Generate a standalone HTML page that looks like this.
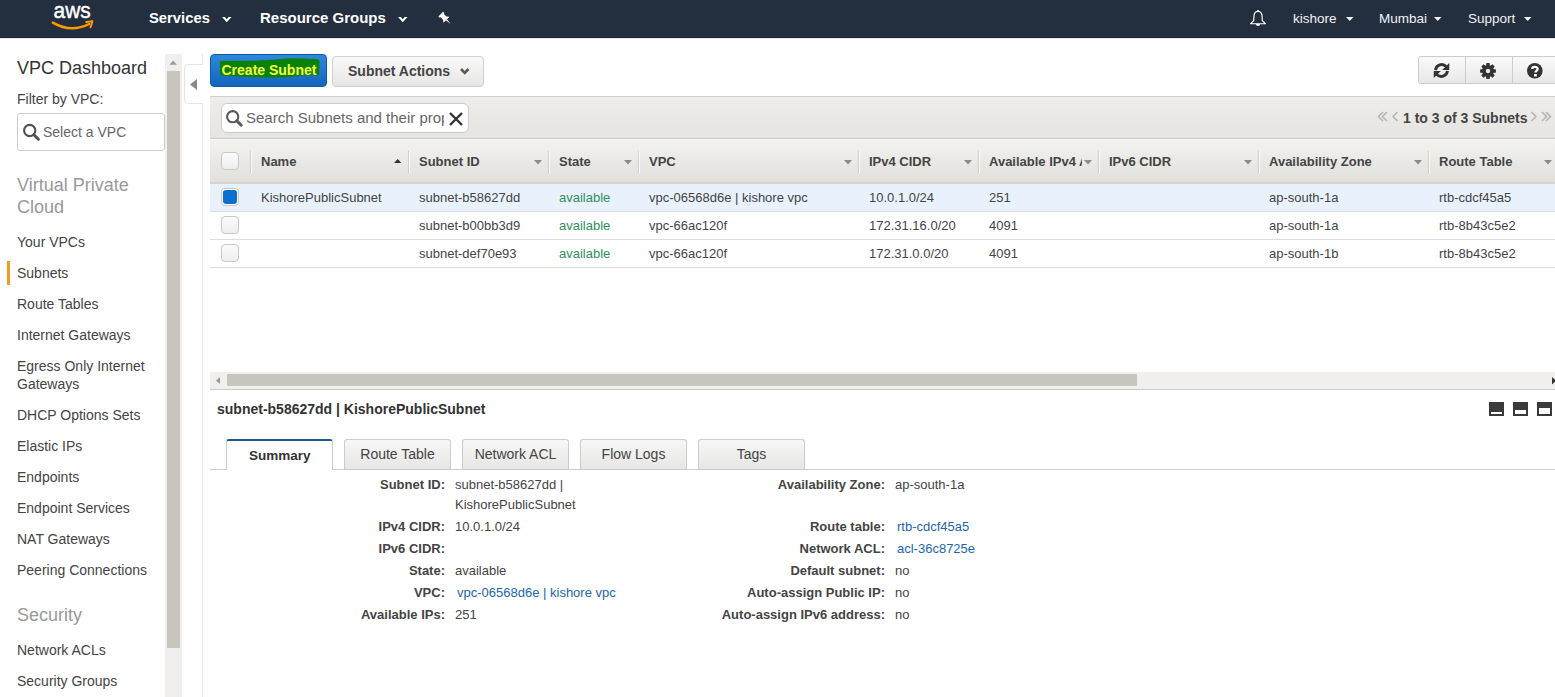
<!DOCTYPE html>
<html><head><meta charset="utf-8">
<style>
*{box-sizing:border-box;margin:0;padding:0}
html,body{width:1555px;height:697px;overflow:hidden;background:#fff;font-family:"Liberation Sans",sans-serif;color:#444}
body{position:relative}
.a{position:absolute;white-space:nowrap}
svg{position:absolute;overflow:visible}
</style></head><body>

<div class="a" style="left:0px;top:0px;width:1555px;height:38px;background:#232f3e;border-bottom:1px solid #1e252e"></div>
<div class="a" style="left:0px;top:38px;width:1555px;height:1px;background:#e9e9e9"></div>
<svg style="left:45px;top:0px" width="55" height="36" viewBox="0 0 55 36">
<text x="8.6" y="17.8" font-family="Liberation Sans" font-size="22" fill="#fff" stroke="#fff" stroke-width="0.45" transform="translate(8.6 0) scale(0.95 1) translate(-8.6 0)">aws</text>
<path d="M7.8 22.6 Q26 33.2 44.2 24" stroke="#f90" stroke-width="2.5" fill="none" stroke-linecap="round"/>
<path d="M41.2 21.9 L47.4 21.3 L45.6 27.2" stroke="#f90" stroke-width="2" fill="none" stroke-linecap="round" stroke-linejoin="round"/>
</svg>
<div class="a " style="left:149px;top:9.97px;font-size:14.8px;line-height:17px;color:#fff;font-weight:bold;">Services</div>
<svg style="left:221.8px;top:16.5px" width="10" height="6"><path d="M0 0 L2.9 0 L4.75 2.3 L6.6 0 L9.5 0 L4.75 5.3Z" fill="#fff"/></svg>
<div class="a " style="left:260px;top:8.90px;font-size:15px;line-height:17px;color:#fff;font-weight:bold;">Resource Groups</div>
<svg style="left:397.5px;top:16.5px" width="10" height="6"><path d="M0 0 L2.9 0 L4.75 2.3 L6.6 0 L9.5 0 L4.75 5.3Z" fill="#fff"/></svg>
<svg style="left:437px;top:10px" width="16" height="16" viewBox="0 0 16 16"><g transform="translate(8.5 8.8) scale(0.9) rotate(-45) translate(-8 -8)" fill="#fff"><path d="M4.3 0.5 H11.7 V2.6 H10.6 V6.8 L12.8 9.6 H3.2 L5.4 6.8 V2.6 H4.3 Z"/><path d="M7.1 9.5 H8.9 L8 16 Z"/></g></svg>
<svg style="left:1249px;top:9px" width="18" height="19" viewBox="0 0 18 19"><path d="M9 2.4 C5.8 2.4 4.9 5 4.9 8 L4.7 11.6 L1.6 14.7 L16.4 14.7 L13.3 11.6 L13.1 8 C13.1 5 12.2 2.4 9 2.4 Z" stroke="#fff" stroke-width="1.15" fill="none" stroke-linejoin="round"/><circle cx="9" cy="1.9" r="1" fill="#fff"/><path d="M6.9 15 A2.1 2.1 0 0 0 11.1 15 Z" fill="#fff"/></svg>
<div class="a " style="left:1293px;top:11.32px;font-size:13.5px;line-height:16px;color:#f2f2f2;">kishore</div>
<svg style="left:1346px;top:16.5px" width="8" height="5"><path d="M0 0 L7.5 0 L3.75 4Z" fill="#f2f2f2"/></svg>
<div class="a " style="left:1379px;top:11.32px;font-size:13.5px;line-height:16px;color:#f2f2f2;">Mumbai</div>
<svg style="left:1434px;top:16.5px" width="8" height="5"><path d="M0 0 L7.5 0 L3.75 4Z" fill="#f2f2f2"/></svg>
<div class="a " style="left:1468px;top:11.32px;font-size:13.5px;line-height:16px;color:#f2f2f2;">Support</div>
<svg style="left:1524px;top:16.5px" width="8" height="5"><path d="M0 0 L7.5 0 L3.75 4Z" fill="#f2f2f2"/></svg>
<div class="a " style="left:17px;top:58.26px;font-size:18px;line-height:21px;color:#333;">VPC Dashboard</div>
<div class="a " style="left:17px;top:91.15px;font-size:14px;line-height:16px;color:#444;">Filter by VPC:</div>
<div class="a" style="left:17px;top:113px;width:148px;height:38px;border:1px solid #ccc;border-radius:3px;background:#fff"></div>
<svg style="left:23px;top:124px" width="18" height="18" viewBox="0 0 18 18"><circle cx="6.7" cy="6.5" r="5.6" stroke="#505050" stroke-width="2.1" fill="none"/><path d="M10.9 10.7 L15.4 15.2" stroke="#505050" stroke-width="3" stroke-linecap="round"/></svg>
<div class="a " style="left:43px;top:124.15px;font-size:14px;line-height:16px;color:#666;">Select a VPC</div>
<div class="a " style="left:17px;top:175.26px;font-size:18px;line-height:21px;color:#999;">Virtual Private</div>
<div class="a " style="left:17px;top:197.26px;font-size:18px;line-height:21px;color:#999;">Cloud</div>
<div class="a " style="left:17px;top:234.15px;font-size:14px;line-height:16px;color:#444;">Your VPCs</div>
<div class="a " style="left:17px;top:265.15px;font-size:14px;line-height:16px;color:#444;">Subnets</div>
<div class="a " style="left:17px;top:296.15px;font-size:14px;line-height:16px;color:#444;">Route Tables</div>
<div class="a " style="left:17px;top:327.15px;font-size:14px;line-height:16px;color:#444;">Internet Gateways</div>
<div class="a " style="left:17px;top:358.15px;font-size:14px;line-height:16px;color:#444;">Egress Only Internet</div>
<div class="a " style="left:17px;top:376.15px;font-size:14px;line-height:16px;color:#444;">Gateways</div>
<div class="a " style="left:17px;top:407.15px;font-size:14px;line-height:16px;color:#444;">DHCP Options Sets</div>
<div class="a " style="left:17px;top:438.15px;font-size:14px;line-height:16px;color:#444;">Elastic IPs</div>
<div class="a " style="left:17px;top:469.15px;font-size:14px;line-height:16px;color:#444;">Endpoints</div>
<div class="a " style="left:17px;top:500.15px;font-size:14px;line-height:16px;color:#444;">Endpoint Services</div>
<div class="a " style="left:17px;top:531.15px;font-size:14px;line-height:16px;color:#444;">NAT Gateways</div>
<div class="a " style="left:17px;top:562.15px;font-size:14px;line-height:16px;color:#444;">Peering Connections</div>
<div class="a " style="left:17px;top:642.15px;font-size:14px;line-height:16px;color:#444;">Network ACLs</div>
<div class="a " style="left:17px;top:673.15px;font-size:14px;line-height:16px;color:#444;">Security Groups</div>
<div class="a" style="left:7px;top:261px;width:3px;height:24px;background:#f39a1f"></div>
<div class="a " style="left:17px;top:605.26px;font-size:18px;line-height:21px;color:#999;">Security</div>
<div class="a" style="left:165px;top:54px;width:17px;height:643px;background:#f0efed"></div>
<div class="a" style="left:167px;top:71px;width:13px;height:577px;background:#c8c5bf"></div>
<svg style="left:169px;top:60px" width="10" height="6"><path d="M0.5 4.8 L4.2 0.5 L7.9 4.8Z" fill="#999"/></svg>
<div class="a" style="left:202px;top:54px;width:1px;height:643px;background:#e8e8e8"></div>
<div class="a" style="left:184px;top:64px;width:19px;height:40px;border:1px solid #e3e3e3;border-right:none;border-radius:5px 0 0 5px;background:#fff"></div>
<svg style="left:190px;top:79px" width="8" height="12"><path d="M7 0 L7 11 L0 5.5Z" fill="#888"/></svg>
<div class="a" style="left:210px;top:54px;width:117px;height:33px;background:linear-gradient(#2d87da,#1465bd);border-radius:4px;border:1px solid #0d5cab"></div>
<svg style="left:205px;top:50px" width="130" height="40" viewBox="0 0 130 40"><path d="M15 11 L50 10.8 L70 9.5 L84 8.2 L100 8.4 L113 9.2 L114.5 11 L114.2 25 L100 25.6 L80 27.3 L60 27.6 L40 26.8 L20 25.8 L15 25 Z" fill="#0a820a"/></svg>
<div class="a " style="left:221.5px;top:62.15px;font-size:14px;line-height:16px;color:#f4ff3c;font-weight:bold;">Create Subnet</div>
<div class="a" style="left:332px;top:56px;width:152px;height:31px;background:linear-gradient(#f9f9f9,#e6e6e4);border:1px solid #cfcfcf;border-radius:4px"></div>
<div class="a " style="left:348px;top:63.15px;font-size:14px;line-height:16px;color:#444;font-weight:bold;">Subnet Actions</div>
<svg style="left:459px;top:67px" width="12" height="9"><path d="M2 2 L5.75 5.8 L9.5 2" stroke="#5a5a5a" stroke-width="2.6" fill="none"/></svg>
<div class="a" style="left:1418px;top:56px;width:140px;height:28px;background:linear-gradient(#fafafa,#e8e8e8);border:1px solid #ccc;border-radius:3px"></div>
<div class="a" style="left:1465px;top:57px;width:1px;height:26px;background:#ccc"></div>
<div class="a" style="left:1512px;top:57px;width:1px;height:26px;background:#ccc"></div>
<svg style="left:1433px;top:62px" width="17" height="17" viewBox="0 0 16 16"><path d="M2.4 7.6 A5.7 5.7 0 0 1 12.4 4.4" stroke="#333" stroke-width="2.7" fill="none"/><path d="M15.3 0.9 L15.3 7.6 L8.6 7.6Z" fill="#333"/><path d="M13.6 8.4 A5.7 5.7 0 0 1 3.6 11.6" stroke="#333" stroke-width="2.7" fill="none"/><path d="M0.7 15.1 L0.7 8.4 L7.4 8.4Z" fill="#333"/></svg>
<svg style="left:1480px;top:62.5px" width="16" height="16" viewBox="-8 -8 16 16"><g fill="#333"><rect x="-1.75" y="-7.9" width="3.5" height="3.5" rx="0.5" transform="rotate(0)"/><rect x="-1.75" y="-7.9" width="3.5" height="3.5" rx="0.5" transform="rotate(45)"/><rect x="-1.75" y="-7.9" width="3.5" height="3.5" rx="0.5" transform="rotate(90)"/><rect x="-1.75" y="-7.9" width="3.5" height="3.5" rx="0.5" transform="rotate(135)"/><rect x="-1.75" y="-7.9" width="3.5" height="3.5" rx="0.5" transform="rotate(180)"/><rect x="-1.75" y="-7.9" width="3.5" height="3.5" rx="0.5" transform="rotate(225)"/><rect x="-1.75" y="-7.9" width="3.5" height="3.5" rx="0.5" transform="rotate(270)"/><rect x="-1.75" y="-7.9" width="3.5" height="3.5" rx="0.5" transform="rotate(315)"/><circle r="6"/></g><circle r="2.2" fill="#eeedeb"/></svg>
<svg style="left:1527px;top:62.5px" width="16" height="16" viewBox="0 0 16 16"><circle cx="7.8" cy="7.8" r="7.8" fill="#333"/><path d="M5.2 6.1 C5.2 3.2 10.6 3.2 10.6 6 C10.6 7.9 8.4 8 8.4 9.6" stroke="#fff" stroke-width="2.3" fill="none"/><rect x="7" y="11" width="2.8" height="2.5" fill="#fff"/></svg>
<div class="a" style="left:210px;top:96px;width:1345px;height:43px;background:linear-gradient(#eeedeb,#e5e4e1);border-top:1px solid #cfcfcf;border-bottom:1px solid #c8c8c6"></div>
<div class="a" style="left:221px;top:103px;width:248px;height:30px;background:#fff;border:1px solid #ccc;border-radius:6px"></div>
<svg style="left:226px;top:108px" width="20" height="20" viewBox="0 0 20 20"><circle cx="6.7" cy="8.7" r="5.6" stroke="#585858" stroke-width="2.1" fill="none"/><path d="M10.9 12.9 L15.2 17.2" stroke="#585858" stroke-width="3" stroke-linecap="round"/></svg>
<div class="a" style="left:246px;top:107px;width:198px;height:22px;overflow:hidden"><div class="a" style="left:0;top:2px;font-size:15px;line-height:17px;color:#666">Search Subnets and their properties</div></div>
<svg style="left:447.5px;top:110.5px" width="16" height="16"><path d="M2 2 L14 14 M14 2 L2 14" stroke="#333" stroke-width="2.4"/></svg>
<div class="a " style="left:1403px;top:110.15px;font-size:14px;line-height:16px;color:#444;font-weight:bold;">1 to 3 of 3 Subnets</div>
<svg style="left:1377px;top:111px" width="24" height="11" viewBox="0 0 24 11"><path d="M6 1 L1.5 5.5 L6 10 M10 1 L5.5 5.5 L10 10 M20.5 1 L16 5.5 L20.5 10" stroke="#b3b3b3" stroke-width="1.5" fill="none"/></svg>
<svg style="left:1530px;top:111px" width="24" height="11" viewBox="0 0 24 11"><path d="M1.5 1 L6 5.5 L1.5 10 M12 1 L16.5 5.5 L12 10 M16 1 L20.5 5.5 L16 10" stroke="#b3b3b3" stroke-width="1.5" fill="none"/></svg>
<div class="a" style="left:210px;top:139px;width:1345px;height:45px;background:linear-gradient(#f3f2f0,#e2e0dc);border-top:1px solid #fafafa;border-bottom:2px solid #d6d4cf"></div>
<div class="a" style="left:221px;top:152px;width:18px;height:18px;background:linear-gradient(#fbfbfb,#eee);border:1px solid #c8c8c8;border-radius:4px"></div>
<div class="a" style="left:250px;top:151px;width:1px;height:23px;background:#d0cec9"></div>
<div class="a" style="left:251px;top:151px;width:1px;height:23px;background:#fbfbfa"></div>
<div class="a " style="left:261px;top:154.00px;font-size:13px;line-height:15px;color:#444;font-weight:bold;">Name</div>
<svg style="left:394px;top:159px" width="8" height="5"><path d="M0 4 L7.4 4 L3.7 0Z" fill="#333"/></svg>
<div class="a" style="left:408px;top:151px;width:1px;height:23px;background:#d0cec9"></div>
<div class="a" style="left:409px;top:151px;width:1px;height:23px;background:#fbfbfa"></div>
<div class="a " style="left:419px;top:154.00px;font-size:13px;line-height:15px;color:#444;font-weight:bold;">Subnet ID</div>
<svg style="left:534px;top:160px" width="9" height="6"><path d="M0 0 L8 0 L4 4.5Z" fill="#8a8a8a"/></svg>
<div class="a" style="left:548px;top:151px;width:1px;height:23px;background:#d0cec9"></div>
<div class="a" style="left:549px;top:151px;width:1px;height:23px;background:#fbfbfa"></div>
<div class="a " style="left:559px;top:154.00px;font-size:13px;line-height:15px;color:#444;font-weight:bold;">State</div>
<svg style="left:624px;top:160px" width="9" height="6"><path d="M0 0 L8 0 L4 4.5Z" fill="#8a8a8a"/></svg>
<div class="a" style="left:638px;top:151px;width:1px;height:23px;background:#d0cec9"></div>
<div class="a" style="left:639px;top:151px;width:1px;height:23px;background:#fbfbfa"></div>
<div class="a " style="left:649px;top:154.00px;font-size:13px;line-height:15px;color:#444;font-weight:bold;">VPC</div>
<svg style="left:844px;top:160px" width="9" height="6"><path d="M0 0 L8 0 L4 4.5Z" fill="#8a8a8a"/></svg>
<div class="a" style="left:858px;top:151px;width:1px;height:23px;background:#d0cec9"></div>
<div class="a" style="left:859px;top:151px;width:1px;height:23px;background:#fbfbfa"></div>
<div class="a " style="left:869px;top:154.00px;font-size:13px;line-height:15px;color:#444;font-weight:bold;">IPv4 CIDR</div>
<svg style="left:964px;top:160px" width="9" height="6"><path d="M0 0 L8 0 L4 4.5Z" fill="#8a8a8a"/></svg>
<div class="a" style="left:978px;top:151px;width:1px;height:23px;background:#d0cec9"></div>
<div class="a" style="left:979px;top:151px;width:1px;height:23px;background:#fbfbfa"></div>
<div class="a" style="left:989px;top:150px;width:93px;height:22px;overflow:hidden"><div class="a" style="left:0;top:4px;font-size:13px;line-height:15px;font-weight:bold;color:#444">Available IPv4 Addresses</div></div>
<svg style="left:1084px;top:160px" width="9" height="6"><path d="M0 0 L8 0 L4 4.5Z" fill="#8a8a8a"/></svg>
<div class="a" style="left:1098px;top:151px;width:1px;height:23px;background:#d0cec9"></div>
<div class="a" style="left:1099px;top:151px;width:1px;height:23px;background:#fbfbfa"></div>
<div class="a " style="left:1109px;top:154.00px;font-size:13px;line-height:15px;color:#444;font-weight:bold;">IPv6 CIDR</div>
<svg style="left:1244px;top:160px" width="9" height="6"><path d="M0 0 L8 0 L4 4.5Z" fill="#8a8a8a"/></svg>
<div class="a" style="left:1258px;top:151px;width:1px;height:23px;background:#d0cec9"></div>
<div class="a" style="left:1259px;top:151px;width:1px;height:23px;background:#fbfbfa"></div>
<div class="a " style="left:1269px;top:154.00px;font-size:13px;line-height:15px;color:#444;font-weight:bold;">Availability Zone</div>
<svg style="left:1414px;top:160px" width="9" height="6"><path d="M0 0 L8 0 L4 4.5Z" fill="#8a8a8a"/></svg>
<div class="a" style="left:1428px;top:151px;width:1px;height:23px;background:#d0cec9"></div>
<div class="a" style="left:1429px;top:151px;width:1px;height:23px;background:#fbfbfa"></div>
<div class="a " style="left:1439px;top:154.00px;font-size:13px;line-height:15px;color:#444;font-weight:bold;">Route Table</div>
<svg style="left:1544px;top:160px" width="9" height="6"><path d="M0 0 L8 0 L4 4.5Z" fill="#8a8a8a"/></svg>
<div class="a" style="left:210px;top:184px;width:1345px;height:28px;background:#e9f2fc;border-bottom:1px solid #ddd"></div>
<div class="a" style="left:221px;top:188px;width:18px;height:18px;background:#fff;border:1px solid #c8c8c8;border-radius:4px"></div>
<div class="a" style="left:223px;top:190px;width:14px;height:14px;background:#0a6fcf;border-radius:3px"></div>
<div class="a " style="left:261px;top:189.50px;font-size:13px;line-height:15px;color:#444;">KishorePublicSubnet</div>
<div class="a " style="left:419px;top:189.50px;font-size:13px;line-height:15px;color:#444;">subnet-b58627dd</div>
<div class="a " style="left:559px;top:189.50px;font-size:13px;line-height:15px;color:#2f8f5b;">available</div>
<div class="a " style="left:649px;top:189.50px;font-size:13px;line-height:15px;color:#444;">vpc-06568d6e | kishore vpc</div>
<div class="a " style="left:869px;top:189.50px;font-size:13px;line-height:15px;color:#444;">10.0.1.0/24</div>
<div class="a " style="left:989px;top:189.50px;font-size:13px;line-height:15px;color:#444;">251</div>
<div class="a " style="left:1269px;top:189.50px;font-size:13px;line-height:15px;color:#444;">ap-south-1a</div>
<div class="a " style="left:1439px;top:189.50px;font-size:13px;line-height:15px;color:#444;">rtb-cdcf45a5</div>
<div class="a" style="left:210px;top:212px;width:1345px;height:28px;background:#fff;border-bottom:1px solid #ddd"></div>
<div class="a" style="left:221px;top:216px;width:18px;height:18px;background:linear-gradient(#fbfbfb,#eee);border:1px solid #c8c8c8;border-radius:4px"></div>
<div class="a " style="left:261px;top:217.50px;font-size:13px;line-height:15px;color:#444;"></div>
<div class="a " style="left:419px;top:217.50px;font-size:13px;line-height:15px;color:#444;">subnet-b00bb3d9</div>
<div class="a " style="left:559px;top:217.50px;font-size:13px;line-height:15px;color:#2f8f5b;">available</div>
<div class="a " style="left:649px;top:217.50px;font-size:13px;line-height:15px;color:#444;">vpc-66ac120f</div>
<div class="a " style="left:869px;top:217.50px;font-size:13px;line-height:15px;color:#444;">172.31.16.0/20</div>
<div class="a " style="left:989px;top:217.50px;font-size:13px;line-height:15px;color:#444;">4091</div>
<div class="a " style="left:1269px;top:217.50px;font-size:13px;line-height:15px;color:#444;">ap-south-1a</div>
<div class="a " style="left:1439px;top:217.50px;font-size:13px;line-height:15px;color:#444;">rtb-8b43c5e2</div>
<div class="a" style="left:210px;top:240px;width:1345px;height:28px;background:#fff;border-bottom:1px solid #ddd"></div>
<div class="a" style="left:221px;top:244px;width:18px;height:18px;background:linear-gradient(#fbfbfb,#eee);border:1px solid #c8c8c8;border-radius:4px"></div>
<div class="a " style="left:261px;top:245.50px;font-size:13px;line-height:15px;color:#444;"></div>
<div class="a " style="left:419px;top:245.50px;font-size:13px;line-height:15px;color:#444;">subnet-def70e93</div>
<div class="a " style="left:559px;top:245.50px;font-size:13px;line-height:15px;color:#2f8f5b;">available</div>
<div class="a " style="left:649px;top:245.50px;font-size:13px;line-height:15px;color:#444;">vpc-66ac120f</div>
<div class="a " style="left:869px;top:245.50px;font-size:13px;line-height:15px;color:#444;">172.31.0.0/20</div>
<div class="a " style="left:989px;top:245.50px;font-size:13px;line-height:15px;color:#444;">4091</div>
<div class="a " style="left:1269px;top:245.50px;font-size:13px;line-height:15px;color:#444;">ap-south-1b</div>
<div class="a " style="left:1439px;top:245.50px;font-size:13px;line-height:15px;color:#444;">rtb-8b43c5e2</div>
<div class="a" style="left:210px;top:372px;width:1345px;height:18px;background:#f1f0ee;border-bottom:1px solid #cbc9c4"></div>
<div class="a" style="left:227px;top:374px;width:910px;height:12px;background:#c8c5bf"></div>
<svg style="left:216px;top:377px" width="5" height="8"><path d="M4 0 L4 7 L0 3.5Z" fill="#999"/></svg>
<svg style="left:1551.5px;top:376.5px" width="5" height="9"><path d="M0 0 L0 7.5 L4 3.75Z" fill="#333"/></svg>
<div class="a " style="left:217px;top:401.15px;font-size:14px;line-height:16px;color:#333;font-weight:bold;">subnet-b58627dd | KishorePublicSubnet</div>
<div class="a" style="left:1489px;top:402px;width:15px;height:14px;background:#3a3a3a"></div>
<div class="a" style="left:1491px;top:412px;width:11px;height:2px;background:#fff"></div>
<div class="a" style="left:1513px;top:402px;width:15px;height:14px;background:#3a3a3a"></div>
<div class="a" style="left:1515px;top:410px;width:11px;height:4px;background:#fff"></div>
<div class="a" style="left:1537px;top:402px;width:15px;height:14px;background:#3a3a3a"></div>
<div class="a" style="left:1539px;top:408px;width:11px;height:6px;background:#fff"></div>
<div class="a" style="left:210px;top:469px;width:1345px;height:1px;background:#ccc"></div>
<div class="a" style="left:226px;top:439px;width:107px;height:31px;background:#fff;border:1px solid #ccc;border-top:2px solid #1c5a96;border-bottom:none;border-radius:3px 3px 0 0"></div>
<div class="a " style="left:249px;top:448.32px;font-size:13.5px;line-height:16px;color:#333;font-weight:bold;">Summary</div>
<div class="a" style="left:344px;top:439px;width:107px;height:30px;background:linear-gradient(#f7f7f7,#e7e6e4);border:1px solid #ccc;border-bottom:none;border-radius:3px 3px 0 0"></div>
<div class="a" style="left:344px;top:446.15px;width:107px;text-align:center;font-size:14px;line-height:16px;color:#444">Route Table</div>
<div class="a" style="left:462px;top:439px;width:107px;height:30px;background:linear-gradient(#f7f7f7,#e7e6e4);border:1px solid #ccc;border-bottom:none;border-radius:3px 3px 0 0"></div>
<div class="a" style="left:462px;top:446.15px;width:107px;text-align:center;font-size:14px;line-height:16px;color:#444">Network ACL</div>
<div class="a" style="left:580px;top:439px;width:107px;height:30px;background:linear-gradient(#f7f7f7,#e7e6e4);border:1px solid #ccc;border-bottom:none;border-radius:3px 3px 0 0"></div>
<div class="a" style="left:580px;top:446.15px;width:107px;text-align:center;font-size:14px;line-height:16px;color:#444">Flow Logs</div>
<div class="a" style="left:698px;top:439px;width:107px;height:30px;background:linear-gradient(#f7f7f7,#e7e6e4);border:1px solid #ccc;border-bottom:none;border-radius:3px 3px 0 0"></div>
<div class="a" style="left:698px;top:446.15px;width:107px;text-align:center;font-size:14px;line-height:16px;color:#444">Tags</div>
<div class="a " style="right:1110px;top:477.00px;font-size:13px;line-height:15px;color:#444;text-align:right;font-weight:bold;">Subnet ID:</div>
<div class="a " style="right:1110px;top:519.00px;font-size:13px;line-height:15px;color:#444;text-align:right;font-weight:bold;">IPv4 CIDR:</div>
<div class="a " style="right:1110px;top:541.00px;font-size:13px;line-height:15px;color:#444;text-align:right;font-weight:bold;">IPv6 CIDR:</div>
<div class="a " style="right:1110px;top:563.00px;font-size:13px;line-height:15px;color:#444;text-align:right;font-weight:bold;">State:</div>
<div class="a " style="right:1110px;top:585.00px;font-size:13px;line-height:15px;color:#444;text-align:right;font-weight:bold;">VPC:</div>
<div class="a " style="right:1110px;top:607.00px;font-size:13px;line-height:15px;color:#444;text-align:right;font-weight:bold;">Available IPs:</div>
<div class="a " style="left:455px;top:477.00px;font-size:13px;line-height:15px;color:#444;">subnet-b58627dd |</div>
<div class="a " style="left:455px;top:497.00px;font-size:13px;line-height:15px;color:#444;">KishorePublicSubnet</div>
<div class="a " style="left:455px;top:519.00px;font-size:13px;line-height:15px;color:#444;">10.0.1.0/24</div>
<div class="a " style="left:455px;top:563.00px;font-size:13px;line-height:15px;color:#444;">available</div>
<div class="a " style="left:457px;top:585.00px;font-size:13px;line-height:15px;color:#2266aa;">vpc-06568d6e | kishore vpc</div>
<div class="a " style="left:455px;top:607.00px;font-size:13px;line-height:15px;color:#444;">251</div>
<div class="a " style="right:670px;top:477.00px;font-size:13px;line-height:15px;color:#444;text-align:right;font-weight:bold;">Availability Zone:</div>
<div class="a " style="right:670px;top:519.00px;font-size:13px;line-height:15px;color:#444;text-align:right;font-weight:bold;">Route table:</div>
<div class="a " style="right:670px;top:541.00px;font-size:13px;line-height:15px;color:#444;text-align:right;font-weight:bold;">Network ACL:</div>
<div class="a " style="right:670px;top:563.00px;font-size:13px;line-height:15px;color:#444;text-align:right;font-weight:bold;">Default subnet:</div>
<div class="a " style="right:670px;top:585.00px;font-size:13px;line-height:15px;color:#444;text-align:right;font-weight:bold;">Auto-assign Public IP:</div>
<div class="a " style="right:670px;top:607.00px;font-size:13px;line-height:15px;color:#444;text-align:right;font-weight:bold;">Auto-assign IPv6 address:</div>
<div class="a " style="left:895px;top:477.00px;font-size:13px;line-height:15px;color:#444;">ap-south-1a</div>
<div class="a " style="left:897px;top:519.00px;font-size:13px;line-height:15px;color:#2266aa;">rtb-cdcf45a5</div>
<div class="a " style="left:897px;top:541.00px;font-size:13px;line-height:15px;color:#2266aa;">acl-36c8725e</div>
<div class="a " style="left:895px;top:563.00px;font-size:13px;line-height:15px;color:#444;">no</div>
<div class="a " style="left:895px;top:585.00px;font-size:13px;line-height:15px;color:#444;">no</div>
<div class="a " style="left:895px;top:607.00px;font-size:13px;line-height:15px;color:#444;">no</div>
</body></html>
